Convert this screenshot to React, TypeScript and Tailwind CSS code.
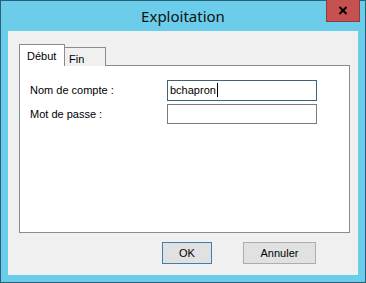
import React from "react";

export default function App() {
  const font = { fontFamily: '"Liberation Sans", Arial, sans-serif' };
  return (
    <div className="w-[366px] h-[283px] bg-[#6bcdea] border border-[#2b5f7a] flex flex-col" style={font}>
      <div className="h-[30px] relative flex items-center justify-center shrink-0">
        <span className="text-[15px] text-[#111] leading-none mt-[1px]" style={{ fontFamily: '"Noto Sans", "Open Sans", sans-serif' }}>
          Exploitation
        </span>
        <div className="absolute right-[5px] top-[-1px] w-[34px] h-[22px] bg-[#c75050] border border-[#8d3a3a] border-t-0 flex items-center justify-center">
          <svg width="10" height="9" viewBox="0 0 10 9">
            <path d="M1.5 1 L8.5 8 M8.5 1 L1.5 8" stroke="#000" strokeWidth="2" />
          </svg>
        </div>
      </div>
      <div className="mx-[7px] mb-[7px] flex-1 bg-[#f0f0f0] flex flex-col pl-[11px] pr-[8px] pt-[13px] text-[11px] text-black">
        <div className="h-[22px] flex items-end shrink-0 relative z-10">
          <div className="w-[46px] h-[22px] bg-white border border-[#8c8c8c] border-b-0 flex items-start pl-[7px] pt-[3px]">
            Début
          </div>
          <div className="w-[41px] h-[19px] bg-[#f0f0f0] border border-[#8c8c8c] border-l-0 border-b-0 flex items-start pl-[4px] pt-[3px]">
            Fin
          </div>
        </div>
        <div className="h-[168px] bg-white border border-[#8c8c8c] mt-[-1px] flex flex-col pl-[10px] pt-[14px] shrink-0">
          <div className="flex items-center h-[20px]">
            <span className="w-[137px]">Nom de compte :</span>
            <div className="w-[150px] h-[21px] border border-[#3c6478] flex items-center pl-[2px]">
              <span>bchapron</span>
              <span className="w-[1px] h-[14px] bg-black ml-[1px]" />
            </div>
          </div>
          <div className="flex items-center h-[20px] mt-[4px]">
            <span className="w-[137px]">Mot de passe :</span>
            <div className="w-[150px] h-[20px] border border-[#7a7a7a]" />
          </div>
        </div>
        <div className="flex mt-[9px] pl-[143px] gap-[31px]">
          <div className="w-[50px] h-[22px] bg-[#e1e1e1] border border-[#3c7fb1] flex items-center justify-center">
            OK
          </div>
          <div className="w-[73px] h-[22px] bg-[#e1e1e1] border border-[#adadad] flex items-center justify-center">
            Annuler
          </div>
        </div>
      </div>
    </div>
  );
}
